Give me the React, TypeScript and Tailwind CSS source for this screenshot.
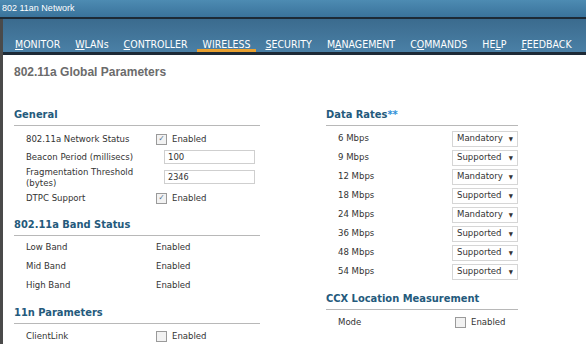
import React from 'react';

const navItems = [
  { label: 'MONITOR', u: 0 },
  { label: 'WLANs', u: 0 },
  { label: 'CONTROLLER', u: 0 },
  { label: 'WIRELESS', u: 1, active: true },
  { label: 'SECURITY', u: 0 },
  { label: 'MANAGEMENT', u: 1 },
  { label: 'COMMANDS', u: 1 },
  { label: 'HELP', u: 2 },
  { label: 'FEEDBACK', u: 0 },
];

const rates = [
  ['6 Mbps', 'Mandatory'],
  ['9 Mbps', 'Supported'],
  ['12 Mbps', 'Mandatory'],
  ['18 Mbps', 'Supported'],
  ['24 Mbps', 'Mandatory'],
  ['36 Mbps', 'Supported'],
  ['48 Mbps', 'Supported'],
  ['54 Mbps', 'Supported'],
];

const Check = ({ on }: { on?: boolean }) => (
  <span className="inline-flex items-center justify-center w-[11px] h-[11px] border border-[#9a9a9a] bg-[#f2f2f2] text-[8px] leading-none text-[#4a6a8a]">
    {on ? '✓' : ''}
  </span>
);

const Heading = ({ children }: { children: React.ReactNode }) => (
  <div className="border-b border-[#b8b8b8] pb-[3px] text-[11px] leading-[14px] font-bold text-[#245a7c]">
    {children}
  </div>
);

const App = () => {
  return (
    <div className="w-[586px] h-[348px] overflow-hidden bg-white font-['DejaVu_Sans',Verdana,sans-serif] font-stretch-condensed text-[#333]">
      <div className="h-[17px] bg-gradient-to-b from-[#4d8bb2] to-[#3a739b] px-[2px] text-[9px] leading-[17px] text-white font-['Liberation_Sans',Arial,sans-serif]">
        802 11an Network
      </div>
      <div className="h-[2px] bg-[#1d2a36]" />
      <div className="flex">
        <div className="w-[3px] bg-[#4a4a4a]" />
        <div className="flex-1">
          <div className="h-[33px] bg-gradient-to-b from-[#3b6b8e] to-[#4a80a6] flex items-end pl-[12px] gap-[15px] text-[10.5px] leading-none text-white">
            {navItems.map((n) => (
              <div
                key={n.label}
                className={`relative pb-[3px] ${n.active ? 'px-[6px] -mx-[6px]' : ''}`}
              >
                {n.label.split('').map((c, i) => (
                  <span key={i} className={i === n.u ? 'underline' : ''}>
                    {c}
                  </span>
                ))}
                {n.active && (
                  <div className="absolute left-0 right-0 bottom-0 h-[3px] bg-[#e8a030]" />
                )}
              </div>
            ))}
          </div>
          <div className="h-[3px] bg-[#1d2a36]" />
          <div className="pl-[11px] pt-[8px] text-[12px] leading-[18px] font-bold text-[#6b6b6b] font-['Liberation_Sans',Arial,sans-serif]">
            802.11a Global Parameters
          </div>
          <div className="flex pt-[27px] text-[9.5px]">
            <div className="w-[246px] ml-[11px]">
              <Heading>General</Heading>
              <div className="pl-[12px] pt-[4px] flex flex-col">
                <div className="flex items-center h-[18px]">
                  <div className="w-[130px]">802.11a Network Status</div>
                  <Check on />
                  <span className="ml-[5px]">Enabled</span>
                </div>
                <div className="flex items-center h-[18px]">
                  <div className="w-[138px]">Beacon Period (millisecs)</div>
                  <div className="w-[91px] h-[14px] border border-[#cfcfcf] px-[3px] leading-[12px]">100</div>
                </div>
                <div className="flex items-center h-[22px]">
                  <div className="w-[138px] leading-[11px]">
                    Fragmentation Threshold
                    <br />
                    (bytes)
                  </div>
                  <div className="w-[91px] h-[14px] border border-[#cfcfcf] px-[3px] leading-[12px] text-[9px]">2346</div>
                </div>
                <div className="flex items-center h-[20px]">
                  <div className="w-[130px]">DTPC Support</div>
                  <Check on />
                  <span className="ml-[5px]">Enabled</span>
                </div>
              </div>
              <div className="pt-[10px]">
                <Heading>802.11a Band Status</Heading>
              </div>
              <div className="pl-[12px] pt-[2px] flex flex-col">
                {['Low Band', 'Mid Band', 'High Band'].map((b) => (
                  <div key={b} className="flex items-center h-[19px]">
                    <div className="w-[130px]">{b}</div>
                    <span>Enabled</span>
                  </div>
                ))}
              </div>
              <div className="pt-[11px]">
                <Heading>11n Parameters</Heading>
              </div>
              <div className="pl-[12px] pt-[5px] flex items-center h-[20px]">
                <div className="w-[130px]">ClientLink</div>
                <Check />
                <span className="ml-[5px]">Enabled</span>
              </div>
            </div>
            <div className="w-[192px] ml-[66px]">
              <Heading>
                Data Rates<span className="text-[#2f8fd8]">**</span>
              </Heading>
              <div className="pl-[12px] pt-[3px] flex flex-col">
                {rates.map(([r, v]) => (
                  <div key={r} className="flex items-center justify-between h-[19px]">
                    <div>{r}</div>
                    <div className="w-[66px] h-[16px] border border-[#d6d6d6] flex items-center justify-between pl-[4px] pr-[4px]">
                      <span>{v}</span>
                      <span className="text-[6px]">▼</span>
                    </div>
                  </div>
                ))}
              </div>
              <div className="pt-[11px]">
                <Heading>CCX Location Measurement</Heading>
              </div>
              <div className="pl-[12px] pt-[8px] flex items-center h-[16px]">
                <div className="w-[117px]">Mode</div>
                <Check />
                <span className="ml-[5px]">Enabled</span>
              </div>
            </div>
          </div>
        </div>
      </div>
    </div>
  );
};

export default App;
